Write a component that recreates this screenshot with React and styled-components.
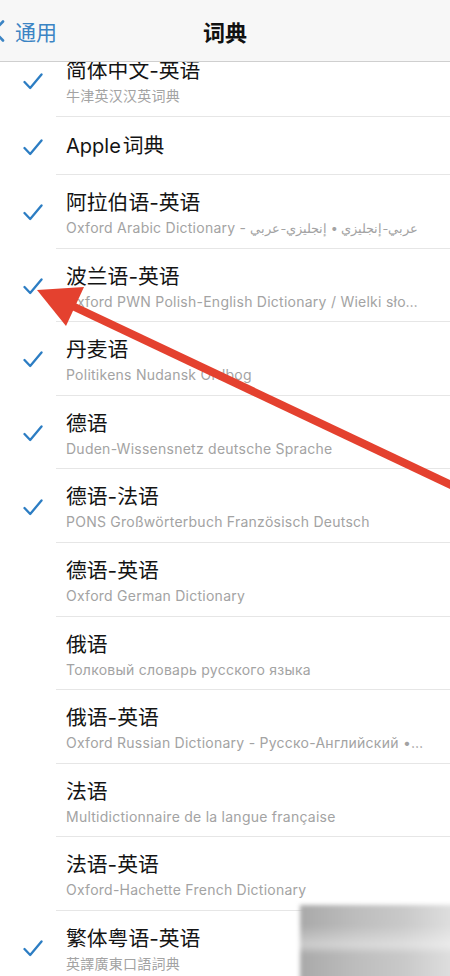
import styled, { createGlobalStyle } from "styled-components";

const GlobalStyle = createGlobalStyle`
  html, body { margin: 0; padding: 0; background: #fff; }
  body {
    font-family: Inter, "Noto Sans CJK SC", "Noto Sans", sans-serif;
    -webkit-font-smoothing: antialiased;
  }
`;

const Screen = styled.div`
  position: relative;
  width: 450px;
  height: 976px;
  overflow: hidden;
  background: #fff;
  display: flex;
  flex-direction: column;
`;

const NavBar = styled.header`
  flex: none;
  height: 61px;
  background: #f7f7f7;
  border-bottom: 1px solid #cfcfcf;
  display: grid;
  grid-template-columns: 1fr auto 1fr;
  align-items: center;
  position: relative;
  z-index: 2;
`;

const Back = styled.div`
  display: flex;
  align-items: center;
  margin-left: -8px;
  gap: 10px;
  color: #3b84c4;
  font-size: 21px;
  font-family: "Noto Sans CJK SC", sans-serif;
  padding-top: 1px;
`;

const NavTitle = styled.h1`
  margin: 0;
  font-size: 22px;
  font-weight: 700;
  color: #111;
  font-family: "Noto Sans CJK SC", sans-serif;
  padding-top: 1px;
`;

const Viewport = styled.main`
  flex: 1;
  overflow: hidden;
`;

const Rows = styled.ul`
  list-style: none;
  margin: -18.6px 0 0;
  padding: 0;
`;

const Row = styled.li`
  display: grid;
  grid-template-columns: 56px 1fr;
  height: ${(p) => (p.$single ? "58px" : "73.6px")};
`;

const CheckCell = styled.div`
  display: flex;
  align-items: center;
  padding-left: 23px;
  padding-top: 2px;
  color: #2c7dc3;
`;

const Body = styled.div`
  min-width: 0;
  border-bottom: 1px solid #e6e6e6;
  padding: ${(p) => (p.$single ? "0 24px 0 10px" : "14px 24px 0 10px")};
  display: flex;
  flex-direction: column;
  justify-content: ${(p) => (p.$single ? "center" : "flex-start")};
`;

const Title = styled.div`
  font-size: 20.8px;
  line-height: 28px;
  color: #141414;
  white-space: nowrap;
`;

const Latin = styled.span`
  font-size: 20px;
  margin-right: 2px;
`;

const Subtitle = styled.div`
  margin-top: 1px;
  font-size: 14px;
  line-height: 20px;
  letter-spacing: 0.25px;
  color: #a3a3a3;
  white-space: nowrap;
  overflow: hidden;
  text-overflow: ellipsis;
`;

const Arabic = styled.bdi`
  font-size: 12.6px;
  letter-spacing: 0;
`;

const Annotation = styled.svg`
  position: absolute;
  left: 0;
  top: 0;
  pointer-events: none;
  z-index: 3;
`;

const Watermark = styled.div`
  position: absolute;
  left: 300px;
  top: 905px;
  width: 160px;
  height: 80px;
  background:
    linear-gradient(180deg, rgba(255,255,255,0) 25%, rgba(255,255,255,0.4) 50%, rgba(255,255,255,0) 62%),
    linear-gradient(90deg, #a9a9a9 0%, #bdbdbd 35%, #c9c9c9 65%, #e2e2e2 100%);
  filter: blur(2px);
  z-index: 3;
`;

const dictionaries = [
  { title: "简体中文-英语", sub: "牛津英汉汉英词典", on: true },
  { title: "词典", brand: "Apple", on: true },
  { title: "阿拉伯语-英语", sub: "Oxford Arabic Dictionary - ", rtl: "عربي-إنجليزي • إنجليزي-عربي", on: true },
  { title: "波兰语-英语", sub: "Oxford PWN Polish-English Dictionary / Wielki słownik polsko-angielski", on: true },
  { title: "丹麦语", sub: "Politikens Nudansk Ordbog", on: true },
  { title: "德语", sub: "Duden-Wissensnetz deutsche Sprache", on: true },
  { title: "德语-法语", sub: "PONS Großwörterbuch Französisch Deutsch", on: true },
  { title: "德语-英语", sub: "Oxford German Dictionary" },
  { title: "俄语", sub: "Толковый словарь русского языка" },
  { title: "俄语-英语", sub: "Oxford Russian Dictionary - Русско-Английский • Англо-Русский" },
  { title: "法语", sub: "Multidictionnaire de la langue française" },
  { title: "法语-英语", sub: "Oxford-Hachette French Dictionary" },
  { title: "繁体粤语-英语", sub: "英譯廣東口語詞典", on: true },
];

function Check() {
  return (
    <svg width="20" height="17" viewBox="0 0 20 17" fill="none">
      <path d="M1.5 9 L7.2 15 L18.5 1.5" stroke="currentColor" strokeWidth="2.3" strokeLinecap="round" strokeLinejoin="round" />
    </svg>
  );
}

function Chevron() {
  return (
    <svg width="13" height="22" viewBox="0 0 13 22" fill="none">
      <path d="M11 1.5 L2 11 L11 20.5" stroke="#3b84c4" strokeWidth="2.6" strokeLinecap="round" strokeLinejoin="round" />
    </svg>
  );
}

export default function App() {
  return (
    <Screen>
      <GlobalStyle />
      <NavBar>
        <Back>
          <Chevron />
          通用
        </Back>
        <NavTitle>词典</NavTitle>
        <div />
      </NavBar>
      <Viewport>
        <Rows>
          {dictionaries.map((d) => (
            <Row key={d.title + (d.brand || "")} $single={!d.sub}>
              <CheckCell>{d.on && <Check />}</CheckCell>
              <Body $single={!d.sub}>
                <Title>
                  {d.brand && <Latin>{d.brand}</Latin>}
                  {d.title}
                </Title>
                {d.sub && (
                  <Subtitle>
                    {d.sub}
                    {d.rtl && <Arabic>{d.rtl}</Arabic>}
                  </Subtitle>
                )}
              </Body>
            </Row>
          ))}
        </Rows>
      </Viewport>

      {/* red pointer drawn over the list */}
      <Annotation width="450" height="976" viewBox="0 0 450 976">
        <line x1="470" y1="494" x2="64" y2="302" stroke="#e4412f" strokeWidth="8" />
        <polygon points="37,290 84,287 66,326" fill="#e4412f" />
      </Annotation>
      <Watermark />
    </Screen>
  );
}
